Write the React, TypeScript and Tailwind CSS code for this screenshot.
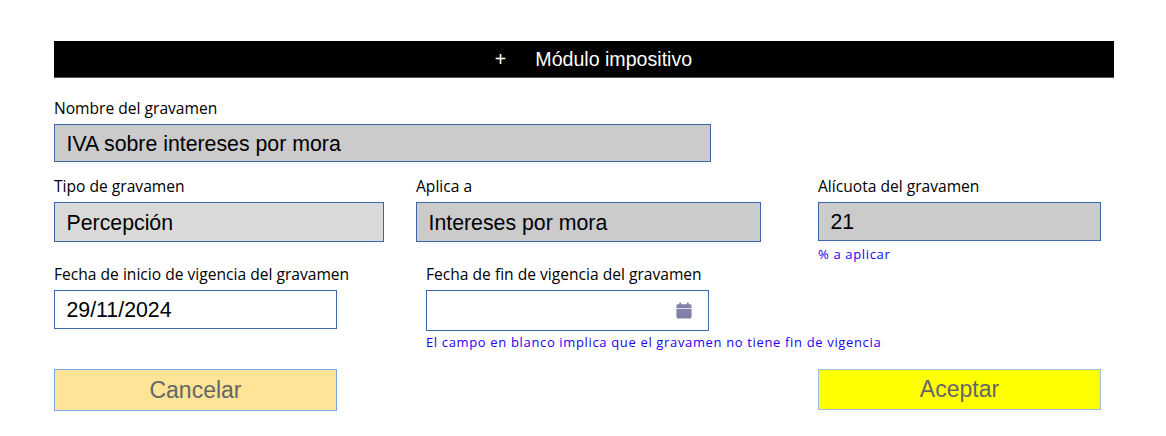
const labelCls = "block h-[24px] text-[15.6px] leading-[24px] text-black font-['Open_Sans',sans-serif] whitespace-nowrap";
const fieldCls = "flex items-center border border-[#3d66ab] pl-[11.5px] pt-[3px] text-[21.3px] text-black font-['Liberation_Sans',sans-serif]";
const helpCls = "text-[13px] leading-[20px] tracking-[0.65px] text-[#2200f5] font-['Open_Sans',sans-serif] whitespace-nowrap";

export default function App() {
  return (
    <div className="w-[1166px] h-[436px] bg-white pt-[41px] pl-[54px] overflow-hidden">
      <div className="flex h-[37px] w-[1060px] items-center justify-center gap-[29px] border-b border-[#555] bg-black pl-[19px] pt-[1px] text-[19.6px] text-white font-['Liberation_Sans',sans-serif]">
        <span>+</span>
        <span>Módulo impositivo</span>
      </div>

      <div className="mt-[18px]">
        <label className={labelCls}>Nombre del gravamen</label>
        <div className={`${fieldCls} mt-[4px] h-[38px] w-[657px] bg-[#cbcbcb]`}>IVA sobre intereses por mora</div>
      </div>

      <div className="mt-[12px] flex items-start">
        <div className="w-[330px]">
          <label className={labelCls}>Tipo de gravamen</label>
          <div className={`${fieldCls} mt-[4px] h-[40px] bg-[#d9d9d9]`}>Percepción</div>
        </div>
        <div className="ml-[32px] w-[345px]">
          <label className={labelCls}>Aplica a</label>
          <div className={`${fieldCls} mt-[4px] h-[40px] bg-[#cbcbcb]`}>Intereses por mora</div>
        </div>
        <div className="ml-[57px] w-[283px]">
          <label className={labelCls}>Alícuota del gravamen</label>
          <div className={`${fieldCls} mt-[4px] h-[39px] bg-[#cbcbcb]`}>21</div>
          <p className={`${helpCls} mt-[3px]`}>% a aplicar</p>
        </div>
      </div>

      <div className="-mt-[2px] flex items-start">
        <div className="w-[283px]">
          <label className={labelCls}>Fecha de inicio de vigencia del gravamen</label>
          <div className={`${fieldCls} mt-[4px] h-[39px] bg-white`}>29/11/2024</div>
        </div>
        <div className="ml-[89px] w-[283px]">
          <label className={labelCls}>Fecha de fin de vigencia del gravamen</label>
          <div className="mt-[4px] flex h-[41px] items-center justify-end border border-[#3d66ab] bg-white pr-[16px]">
            <svg viewBox="0 0 16 18" className="h-[17px] w-[16px]" fill="#8280a8" aria-hidden="true">
              <rect x="3" y="0.5" width="2" height="3.5" rx="0.5" />
              <rect x="11" y="0.5" width="2" height="3.5" rx="0.5" />
              <path d="M1.5 2.5h13a1.5 1.5 0 0 1 1.5 1.5v2.5H0V4a1.5 1.5 0 0 1 1.5-1.5Z" />
              <path d="M0 7.5h16V16a1.5 1.5 0 0 1-1.5 1.5h-13A1.5 1.5 0 0 1 0 16Z" />
            </svg>
          </div>
          <p className={`${helpCls} mt-px`}>El campo en blanco implica que el gravamen no tiene fin de vigencia</p>
        </div>
      </div>

      <div className="mt-[17px] flex w-[1047px] items-start justify-between">
        <button className="h-[42px] w-[283px] border border-[#7aa7ec] bg-[#ffe396] text-[23px] text-[#666] font-['Liberation_Sans',sans-serif]">Cancelar</button>
        <button className="h-[41px] w-[283px] border border-[#9dbcec] bg-[#ffff00] text-[23px] text-[#666] font-['Liberation_Sans',sans-serif]">Aceptar</button>
      </div>
    </div>
  );
}
